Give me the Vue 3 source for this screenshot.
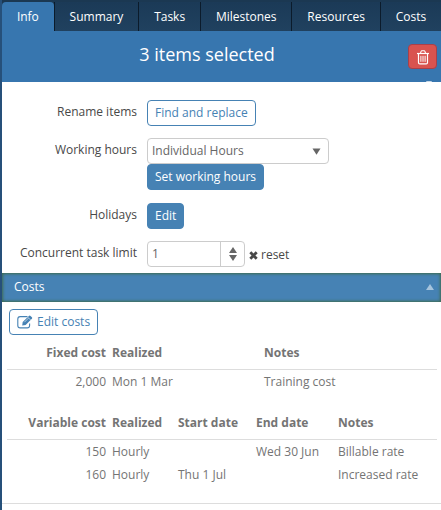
<script setup>
import { ref } from 'vue'

const tabs = ['Info', 'Summary', 'Tasks', 'Milestones', 'Resources', 'Costs']
const active = ref('Info')
const hours = ref('Individual Hours')
const limit = ref('1')
const open = ref(true)

const fixedCosts = [{ cost: '2,000', realized: 'Mon 1 Mar', notes: 'Training cost' }]
const variableCosts = [
  { cost: '150', realized: 'Hourly', start: '', end: 'Wed 30 Jun', notes: 'Billable rate' },
  { cost: '160', realized: 'Hourly', start: 'Thu 1 Jul', end: '', notes: 'Increased rate' },
]

function step(n) {
  limit.value = String(Math.max(1, (Number(limit.value) || 0) + n))
}
</script>

<template>
  <div class="panel">
    <nav class="tabs">
      <button
        v-for="t in tabs"
        :key="t"
        type="button"
        class="tab"
        :class="{ active: t === active }"
        @click="active = t"
      >{{ t }}</button>
    </nav>

    <header class="header">
      <h1 class="title">3 items selected</h1>
      <button type="button" class="delete" aria-label="Delete">
        <svg width="14" height="15" viewBox="0 0 14 15" fill="none" stroke="currentColor">
          <path d="M1 3.5h12" stroke-width="1.2" />
          <path d="M4.5 3.2l.6-1.8q.2-.6.8-.6h2.2q.6 0 .8.6l.6 1.8" stroke-width="1.1" />
          <path d="M2.5 3.8v8.6q0 1.5 1.3 1.5h6.4q1.3 0 1.3-1.5V3.8" stroke-width="1.2" />
          <path d="M4.9 5.8v6M7 5.8v6M9.1 5.8v6" />
        </svg>
      </button>
    </header>

    <form class="form" @submit.prevent>
      <label class="label" for="rename">Rename items</label>
      <div class="field"><button id="rename" type="button" class="btn outline">Find and replace</button></div>

      <label class="label" for="hours">Working hours</label>
      <div class="field stack">
        <div class="select">
          <select id="hours" v-model="hours">
            <option>Individual Hours</option>
            <option>Default Hours</option>
          </select>
          <svg class="caret" width="9" height="7" viewBox="0 0 9 7"><path d="M.5.5h8L4.5 6.8z" fill="currentColor" /></svg>
        </div>
        <button type="button" class="btn solid">Set working hours</button>
      </div>

      <label class="label" for="holidays">Holidays</label>
      <div class="field"><button id="holidays" type="button" class="btn solid">Edit</button></div>

      <label class="label" for="limit">Concurrent task limit</label>
      <div class="field">
        <div class="stepper">
          <input id="limit" v-model="limit" type="text" inputmode="numeric" />
          <div class="steps">
            <button type="button" aria-label="Increase" @click="step(1)">
              <svg width="8" height="6" viewBox="0 0 8 6"><path d="M0 6h8L4 0z" fill="currentColor" /></svg>
            </button>
            <button type="button" aria-label="Decrease" @click="step(-1)">
              <svg width="8" height="6" viewBox="0 0 8 6"><path d="M0 0h8L4 6z" fill="currentColor" /></svg>
            </button>
          </div>
        </div>
        <button type="button" class="reset" @click="limit = '1'">
          <svg width="9" height="9" viewBox="0 0 9 9"><path d="M1.3 1.3l6.4 6.4M7.7 1.3L1.3 7.7" stroke="currentColor" stroke-width="2.8" /></svg>
          reset
        </button>
      </div>
    </form>

    <button type="button" class="section" :aria-expanded="open" @click="open = !open">
      Costs
      <svg width="8" height="6" viewBox="0 0 8 6"><path d="M0 6h8L4 0z" fill="currentColor" /></svg>
    </button>

    <section v-if="open" class="costs">
      <button type="button" class="btn outline edit">
        <svg width="16" height="14" viewBox="0 0 16 14" fill="none" stroke="currentColor">
          <path d="M10.5 1.6H3.2Q.8 1.6.8 4v6.5q0 2.4 2.4 2.4h7q2.4 0 2.4-2.4V8.6" stroke-width="1.1" />
          <path d="M5.2 10.4l.5-3.4L11.9.9q.8-.7 1.6 0l1.4 1.3q.7.8 0 1.6L8.6 10z" fill="currentColor" stroke="none" />
          <path d="M10.8 2.2l2.8 2.8M7.4 7.2l4-4" stroke="#fff" stroke-width=".6" />
        </svg>
        Edit costs
      </button>

      <table class="table">
        <colgroup><col class="c-cost" /><col class="c-wide" /><col /></colgroup>
        <thead>
          <tr><th class="num">Fixed cost</th><th>Realized</th><th>Notes</th></tr>
        </thead>
        <tbody>
          <tr v-for="r in fixedCosts" :key="r.cost">
            <td class="num">{{ r.cost }}</td><td>{{ r.realized }}</td><td>{{ r.notes }}</td>
          </tr>
        </tbody>
      </table>

      <table class="table">
        <colgroup><col class="c-cost" /><col class="c-real" /><col class="c-start" /><col class="c-end" /><col /></colgroup>
        <thead>
          <tr><th class="num">Variable cost</th><th>Realized</th><th>Start date</th><th>End date</th><th>Notes</th></tr>
        </thead>
        <tbody>
          <tr v-for="r in variableCosts" :key="r.cost">
            <td class="num">{{ r.cost }}</td><td>{{ r.realized }}</td><td>{{ r.start }}</td><td>{{ r.end }}</td><td>{{ r.notes }}</td>
          </tr>
        </tbody>
      </table>
    </section>
  </div>
</template>

<style>
body {
  margin: 0;
  background: #fff;
}
</style>

<style scoped>
.panel {
  box-sizing: border-box;
  min-height: 100vh;
  border-left: 2px solid #26507a;
  overflow: hidden;
  font: 12px/18px "Open Sans", "Noto Sans", sans-serif;
  color: #484848;
}
button, input, select {
  font: inherit;
  color: inherit;
  margin: 0;
}
button {
  cursor: pointer;
}
svg {
  display: block;
  flex: none;
}
.tabs {
  display: flex;
  padding-top: 2px;
  background: #1b3852;
}
.tab {
  flex: 1 0 auto;
  height: 29px;
  padding: 0 14px;
  border: 0;
  border-left: 1px solid #0b1b2b;
  background: linear-gradient(#1b3a57, #20415f);
  color: #fff;
  white-space: nowrap;
}
.tab:first-child {
  border-left: 0;
}
.tab.active {
  background: #3776af;
  border-radius: 4px 4px 0 0;
}
.header {
  position: relative;
  display: flex;
  align-items: center;
  height: 51px;
  padding-right: 4px;
  background: #3776af;
}
.header::after {
  content: "";
  position: absolute;
  right: 9px;
  bottom: 0;
  width: 6px;
  height: 1px;
  border-radius: 3px 3px 0 0;
  background: #c3d6e7;
}
.title {
  flex: 1;
  margin: 0;
  padding: 0 0 6px 4px;
  font-size: 18px;
  line-height: 24px;
  font-weight: 400;
  text-align: center;
  color: #fff;
}
.delete {
  display: flex;
  align-items: center;
  justify-content: center;
  width: 29px;
  height: 25px;
  padding: 1px 0 0;
  border: 1px solid #a8404a;
  border-radius: 4px;
  background: #d9534f;
  color: #fff;
}
.form {
  display: grid;
  grid-template-columns: 135px 1fr;
  gap: 12px 10px;
  padding: 18px 8px 6px 0;
}
.label {
  padding-top: 3px;
  text-align: right;
  white-space: nowrap;
}
.field {
  display: flex;
  align-items: center;
}
.stack {
  flex-direction: column;
  align-items: flex-start;
  padding-bottom: 1px;
}
.btn {
  height: 26px;
  padding: 0 7px;
  border: 1px solid #4682b4;
  border-radius: 4px;
  white-space: nowrap;
}
.outline {
  background: #fff;
  color: #4682b4;
}
.solid {
  background: #4682b4;
  color: #fff;
}
.select {
  display: grid;
  align-items: center;
  width: 182px;
  color: #666;
}
.select select {
  grid-area: 1 / 1;
  width: 100%;
  height: 26px;
  padding: 0 20px 0 4px;
  border: 1px solid #ccc;
  border-radius: 4px;
  background: #fff;
  appearance: none;
}
.caret {
  grid-area: 1 / 1;
  justify-self: end;
  margin-right: 8px;
  pointer-events: none;
}
.stepper {
  display: flex;
  box-sizing: border-box;
  width: 98px;
  height: 26px;
  border: 1px solid #ccc;
  border-radius: 4px;
  background: #fff;
  color: #666;
}
.stepper input {
  flex: 1;
  min-width: 0;
  padding: 0 4px;
  border: 0;
  background: none;
}
.steps {
  display: flex;
  flex-direction: column;
  justify-content: center;
  gap: 2px;
  width: 23px;
  border-left: 1px solid #ccc;
}
.steps button {
  display: flex;
  justify-content: center;
  padding: 0;
  border: 0;
  background: none;
}
.reset {
  display: flex;
  align-items: center;
  gap: 3px;
  padding: 2px 4px 0;
  border: 0;
  background: none;
}
.section {
  display: flex;
  align-items: center;
  justify-content: space-between;
  width: 100%;
  height: 29px;
  padding: 0 7px 1px 12px;
  border: 0;
  background: #4682b4;
  box-shadow: inset 0 0 3px 1px #3f6b4f;
  color: #fff;
}
.section svg {
  color: #a6c4dd;
}
.costs {
  padding: 7px 4px 17px 5px;
  border-bottom: 1px solid #ddd;
  color: #747474;
}
.edit {
  display: flex;
  align-items: center;
  gap: 4px;
  margin-left: 2px;
}
.table {
  width: 100%;
  table-layout: fixed;
  border-collapse: separate;
  border-spacing: 0;
}
.table + .table {
  margin-top: 12px;
}
.c-cost {
  width: 102px;
}
.c-wide {
  width: 152px;
}
.c-real {
  width: 66px;
}
.c-start {
  width: 78px;
}
.c-end {
  width: 82px;
}
th, td {
  height: 22px;
  padding: 1px 0 0 3px;
  text-align: left;
  white-space: nowrap;
}
th {
  height: 32px;
  padding-top: 2px;
  border-bottom: 1px solid #ddd;
  font-weight: 700;
}
th.num, td.num {
  padding-left: 0;
  padding-right: 3px;
  text-align: right;
}
</style>
